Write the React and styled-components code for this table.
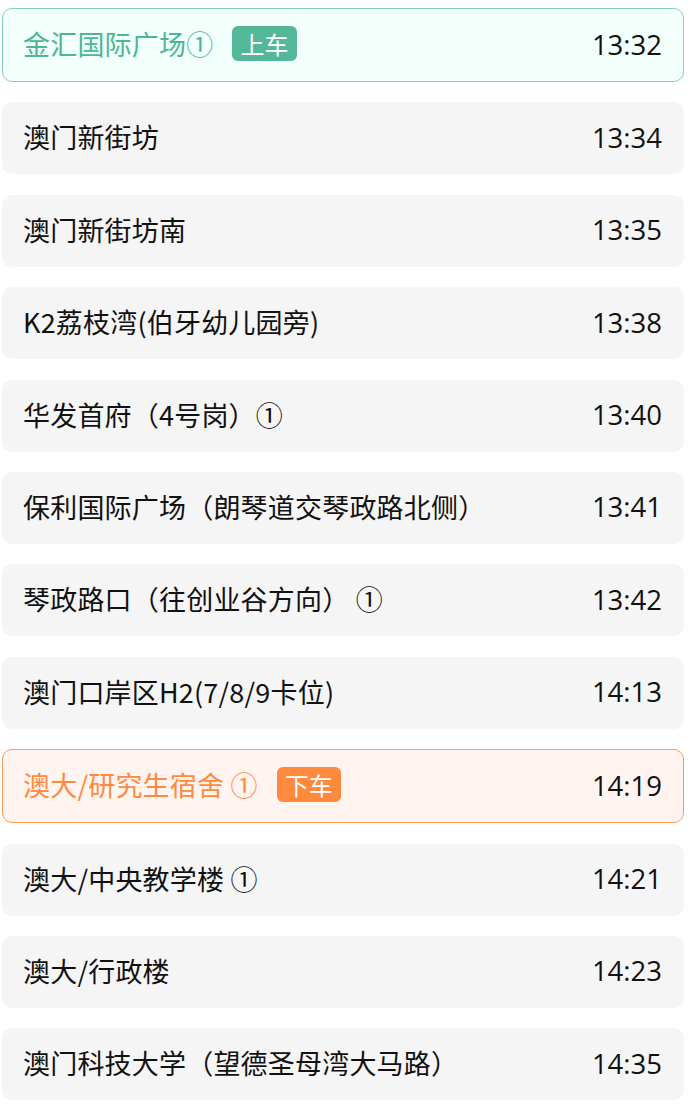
import React from 'react';
import styled, { createGlobalStyle, css } from 'styled-components';

const GlobalStyle = createGlobalStyle`
  body {
    margin: 0;
    background: #ffffff;
    font-family: "Noto Sans CJK SC", "Noto Sans", sans-serif;
  }
`;

const List = styled.div`
  display: flex;
  flex-direction: column;
  gap: 20.4px;
  padding: 8px 6px 8px 2px;
`;

const tones = {
  board: { text: '#4db795', bg: '#f2fffb', border: '#80d1b6', badge: '#55b799' },
  alight: { text: '#ff8a3d', bg: '#fff4ef', border: '#ff9a58', badge: '#ff8a3d' },
};

const Row = styled.div`
  display: flex;
  align-items: center;
  justify-content: space-between;
  height: 72px;
  padding: 0 22px 0 21px;
  border-radius: 10px;
  background: #f5f5f5;
  color: #111111;
  font-size: 27px;
  ${p => p.$tone && css`
    height: 74px;
    padding: 0 21px 0 20px;
    background: ${tones[p.$tone].bg};
    border: 1px solid ${tones[p.$tone].border};
    box-sizing: border-box;
    color: ${tones[p.$tone].text};
  `}
`;

const Name = styled.div`
  display: flex;
  align-items: center;
  white-space: nowrap;
  padding-bottom: 3px;
  letter-spacing: 0.2px;
`;

const Badge = styled.span`
  display: inline-flex;
  align-items: center;
  justify-content: center;
  margin-left: 19px;
  height: 35px;
  padding: 0 8px;
  border-radius: 6px;
  background: ${p => tones[p.$tone].badge};
  color: #ffffff;
  font-size: 24px;
`;

const Time = styled.div`
  color: #111111;
  font-family: "Open Sans", "Noto Sans", sans-serif;
  font-size: 27.5px;
  padding-bottom: 2px;
`;

const stops = [
  { name: '金汇国际广场①', time: '13:32', tone: 'board', badge: '上车' },
  { name: '澳门新街坊', time: '13:34' },
  { name: '澳门新街坊南', time: '13:35' },
  { name: 'K2荔枝湾(伯牙幼儿园旁)', time: '13:38' },
  { name: '华发首府（4号岗）①', time: '13:40' },
  { name: '保利国际广场（朗琴道交琴政路北侧）', time: '13:41' },
  { name: '琴政路口（往创业谷方向） ①', time: '13:42' },
  { name: '澳门口岸区H2(7/8/9卡位)', time: '14:13' },
  { name: '澳大/研究生宿舍 ①', time: '14:19', tone: 'alight', badge: '下车' },
  { name: '澳大/中央教学楼 ①', time: '14:21' },
  { name: '澳大/行政楼', time: '14:23' },
  { name: '澳门科技大学（望德圣母湾大马路）', time: '14:35' },
];

export default function App() {
  return (
    <>
      <GlobalStyle />
      <List>
        {stops.map(stop => (
          <Row key={stop.name} $tone={stop.tone}>
            <Name>
              {stop.name}
              {stop.badge && <Badge $tone={stop.tone}>{stop.badge}</Badge>}
            </Name>
            <Time>{stop.time}</Time>
          </Row>
        ))}
      </List>
    </>
  );
}
